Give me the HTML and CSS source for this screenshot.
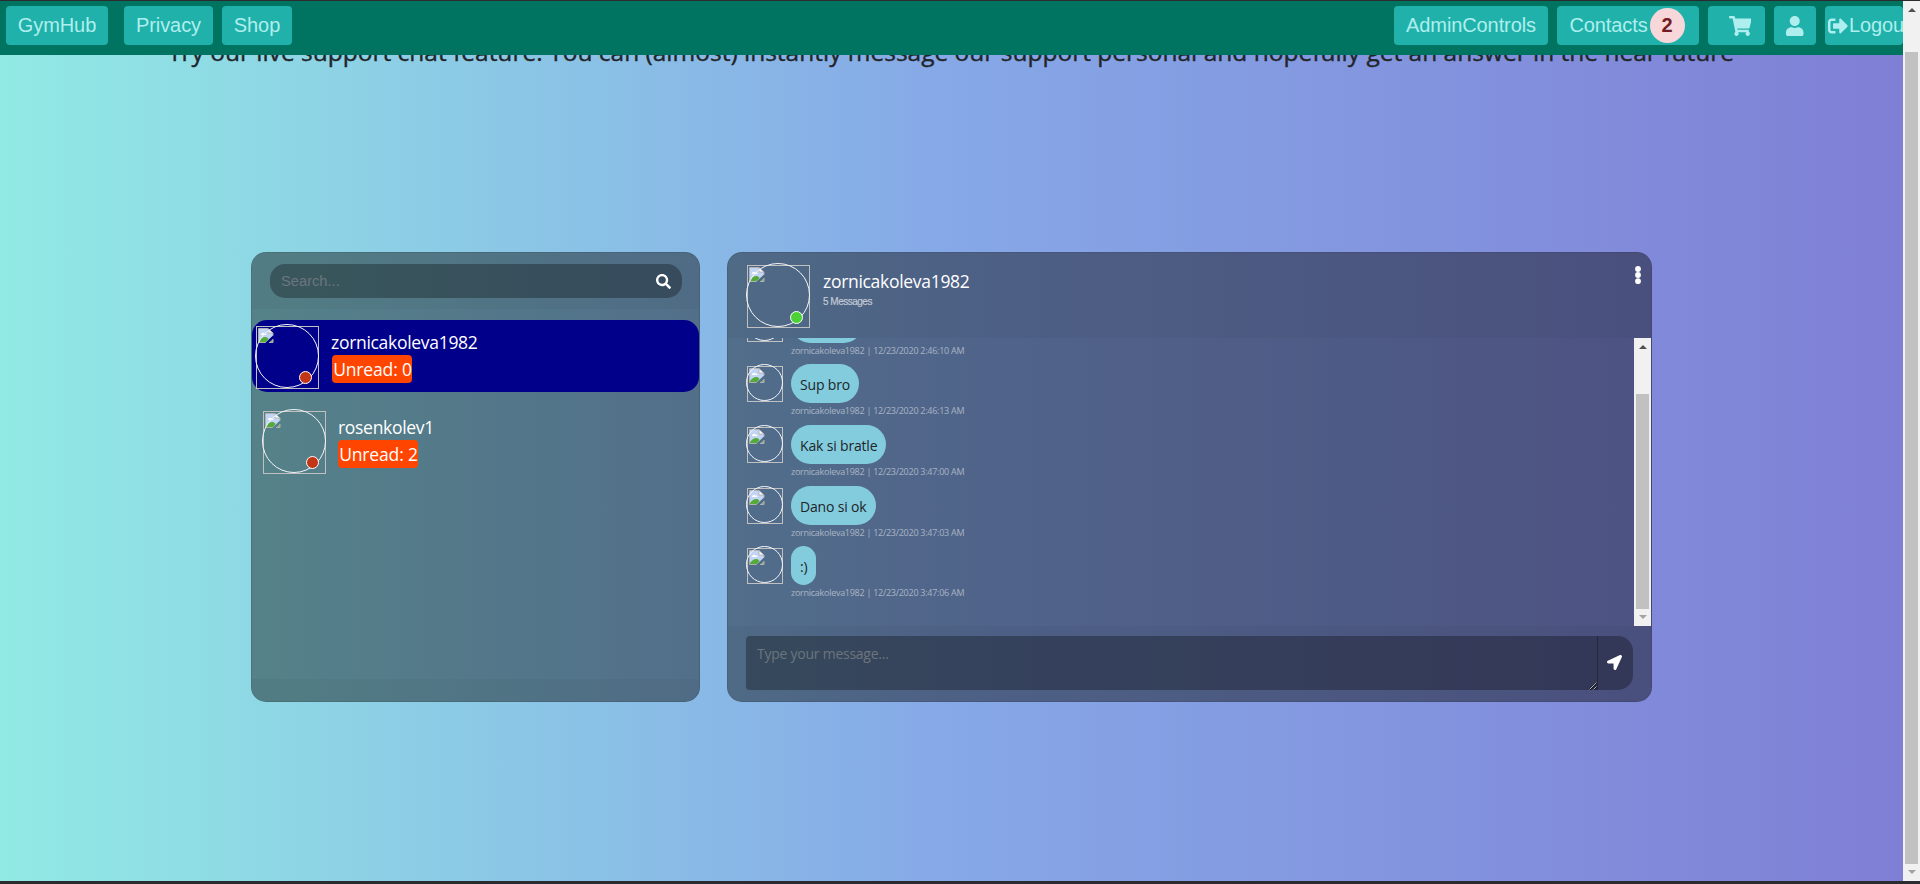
FILE: index.html
```html
<!DOCTYPE html>
<html lang="en">
<head>
<meta charset="utf-8">
<title>GymHub - Contacts</title>
<link rel="stylesheet" href="styles.css">
</head>
<body>
<svg class="symbols" aria-hidden="true">
  <symbol id="broken" viewBox="0 0 16 16">
    <path d="M1 1h9l5 4v2.500L7.500 14.500H1z" fill="#c3d5f5"/>
    <path d="M3 7a2 2 0 0 1 3.500-1.500A1.500 1.500 0 0 1 8.500 7z" fill="#fff"/>
    <path d="M1 14.500v-1.500C3 10.500 5 9 7 9c1.500 0 2.500.6 3.500 2L7.500 14.500z" fill="#55ab39"/>
    <path d="M11 14.500L15 11v3.500z" fill="#8fae84"/>
    <path d="M7.500 14.500h-7V.5H10M15 5v2.500M15 11v3.500h-4" fill="none" stroke="#b0b0b0"/>
    <path d="M10 .5V5h5z" fill="#fff" stroke="#aaa" stroke-width=".8"/>
  </symbol>
</svg>
<div class="frame">
  <div class="page">
    <nav class="nav">
      <div class="nav-group">
        <a class="btn brand">GymHub</a><a class="btn privacy">Privacy</a><a class="btn shop">Shop</a>
      </div>
      <div class="nav-group">
        <a class="btn admin">AdminControls</a>
        <a class="btn contacts">Contacts<span class="count">2</span></a>
        <a class="btn cart"><svg width="22.500" height="20" viewBox="0 0 576 512"><path fill="currentColor" d="M528.120 301.319l47.273-208C578.806 78.301 567.391 64 551.990 64H159.208l-9.166-44.810C147.758 8.021 137.930 0 126.529 0H24C10.745 0 0 10.745 0 24v16c0 13.255 10.745 24 24 24h69.883l70.248 343.435C147.325 417.100 136 435.222 136 456c0 30.928 25.072 56 56 56s56-25.072 56-56c0-15.674-6.447-29.835-16.824-40h209.647C430.447 426.165 424 440.326 424 456c0 30.928 25.072 56 56 56s56-25.072 56-56c0-22.172-12.888-41.332-31.579-50.405l5.517-24.276c3.413-15.018-8.002-29.319-23.403-29.319H218.117l-6.545-32h293.145c11.206 0 20.920-7.754 23.403-18.681z"/></svg></a>
        <a class="btn user"><svg width="17.500" height="20" viewBox="0 0 448 512"><path fill="currentColor" d="M224 256c70.700 0 128-57.300 128-128S294.700 0 224 0 96 57.300 96 128s57.300 128 128 128zm89.600 32h-16.700c-22.200 10.200-46.900 16-72.900 16s-50.600-5.800-72.900-16h-16.700C60.200 288 0 348.200 0 422.400V464c0 26.500 21.500 48 48 48h352c26.500 0 48-21.500 48-48v-41.600c0-74.200-60.200-134.400-134.400-134.400z"/></svg></a>
        <a class="btn logout"><svg width="20" height="20" viewBox="0 0 512 512"><path fill="currentColor" d="M497 273L329 441c-15 15-41 4.500-41-17v-96H152c-13.300 0-24-10.700-24-24v-96c0-13.300 10.700-24 24-24h136V88c0-21.400 25.900-32 41-17l168 168c9.300 9.400 9.300 24.600 0 34zM192 436v-40c0-6.600-5.400-12-12-12H96c-17.700 0-32-14.300-32-32V160c0-17.700 14.300-32 32-32h84c6.600 0 12-5.400 12-12V76c0-6.600-5.400-12-12-12H96c-53 0-96 43-96 96v192c0 53 43 96 96 96h84c6.600 0 12-5.400 12-12z"/></svg>Logout</a>
      </div>
    </nav>
    <div class="lead"><h1 class="heading">Try our live support chat feature. You can (almost) instantly message our support personal and hopefully get an answer in the near future</h1></div>

    <main class="chat">
      <section class="card people">
        <header class="card-bar search-bar">
          <div class="search"><span>Search...</span><svg width="15" height="15" viewBox="0 0 512 512"><path fill="#fff" d="M505 442.700L405.300 343c-4.500-4.500-10.600-7-17-7H372c27.600-35.300 44-79.700 44-128C416 93.100 322.900 0 208 0S0 93.100 0 208s93.100 208 208 208c48.300 0 92.700-16.400 128-44v16.300c0 6.400 2.500 12.500 7 17l99.700 99.700c9.400 9.400 24.600 9.400 33.900 0l28.300-28.300c9.400-9.400 9.400-24.600.1-34zM208 336c-70.700 0-128-57.200-128-128 0-70.700 57.200-128 128-128 70.700 0 128 57.200 128 128 0 70.700-57.200 128-128 128z"/></svg></div>
        </header>
        <div class="people-list">
          <div class="person active">
            <div class="avatar"><svg class="broken"><use href="#broken"/></svg><i class="ring"></i><i class="dot"></i></div>
            <div class="info"><div class="name">zornicakoleva1982</div><span class="unread">Unread: 0</span></div>
          </div>
          <div class="person">
            <div class="avatar"><svg class="broken"><use href="#broken"/></svg><i class="ring"></i><i class="dot"></i></div>
            <div class="info"><div class="name">rosenkolev1</div><span class="unread">Unread: 2</span></div>
          </div>
        </div>
        <footer class="card-bar people-foot"></footer>
      </section>

      <section class="card talk">
        <header class="card-bar talk-head">
          <div class="avatar"><svg class="broken"><use href="#broken"/></svg><i class="ring"></i><i class="dot online"></i></div>
          <div class="info"><div class="name">zornicakoleva1982</div><p class="total">5 Messages</p></div>
          <svg class="dots" width="6" height="18" viewBox="0 0 6 18" fill="#fff"><circle cx="3" cy="3" r="2.900"/><circle cx="3" cy="9" r="2.900"/><circle cx="3" cy="15.200" r="2.900"/></svg>
        </header>
        <div class="talk-body">
          <div class="messages">
            <div class="message"><div class="avatar small"><svg class="broken"><use href="#broken"/></svg><i class="ring"></i></div><div><div class="bubble first"></div><div class="time">zornicakoleva1982 | 12/23/2020 2:46:10 AM</div></div></div>
            <div class="message"><div class="avatar small"><svg class="broken"><use href="#broken"/></svg><i class="ring"></i></div><div><div class="bubble">Sup bro</div><div class="time">zornicakoleva1982 | 12/23/2020 2:46:13 AM</div></div></div>
            <div class="message"><div class="avatar small"><svg class="broken"><use href="#broken"/></svg><i class="ring"></i></div><div><div class="bubble">Kak si bratle</div><div class="time">zornicakoleva1982 | 12/23/2020 3:47:00 AM</div></div></div>
            <div class="message"><div class="avatar small"><svg class="broken"><use href="#broken"/></svg><i class="ring"></i></div><div><div class="bubble">Dano si ok</div><div class="time">zornicakoleva1982 | 12/23/2020 3:47:03 AM</div></div></div>
            <div class="message"><div class="avatar small"><svg class="broken"><use href="#broken"/></svg><i class="ring"></i></div><div><div class="bubble">:)</div><div class="time">zornicakoleva1982 | 12/23/2020 3:47:06 AM</div></div></div>
          </div>
          <div class="scroll inner"><i class="arrow up"></i><i class="thumb"></i><i class="arrow down"></i></div>
        </div>
        <footer class="card-bar talk-foot">
          <div class="compose"><span>Type your message...</span><svg class="grip" width="8" height="8" viewBox="0 0 8 8"><path d="M0.500 8L8 .5M4.500 8L8 4.500" stroke="#111526" stroke-width="2"/><path d="M.5 7.500L7.500 .5M4.500 7.500L7.500 4.500" stroke="#c8c8cc" stroke-width=".9"/></svg></div>
          <div class="send"><svg width="15" height="15" viewBox="0 0 512 512"><path fill="#fff" d="M444.520 3.520L28.740 195.420c-47.970 22.390-31.980 92.750 19.190 92.750h175.910v175.910c0 51.170 70.360 67.170 92.750 19.190l191.900-415.780c15.990-38.390-25.590-79.970-63.970-63.970z"/></svg></div>
        </footer>
      </section>
    </main>
  </div>
  <div class="scroll outer"><i class="arrow up"></i><i class="thumb"></i><i class="arrow down"></i></div>
</div>
</body>
</html>
```
FILE: styles.css
```css
* { box-sizing: border-box; }
body {
  margin: 0;
  height: 884px;
  overflow: hidden;
  padding: 1px 0 3px;
  background: #2b2b2f;
  font-family: "Open Sans", "Noto Sans", sans-serif;
  color: #212529;
}
.symbols { display: none; }
.frame { display: flex; height: 880px; }
.page {
  width: 1903px;
  overflow: hidden;
  background: linear-gradient(to right, #91eae4, #86a8e7, #7f7fd5);
}

/* navigation */
.nav {
  position: relative;
  z-index: 1;
  display: flex;
  justify-content: space-between;
  height: 54px;
  padding: 5px 0 0 6px;
  background: #007361;
}
.nav-group { display: flex; }
.btn {
  display: flex;
  align-items: center;
  justify-content: center;
  flex: none;
  height: 39px;
  border-radius: 4px;
  background: #20b2aa;
  color: #afeeee;
  font: 20px "Liberation Sans", Arial, sans-serif;
  letter-spacing: -.1px;
}
.brand { width: 102px; margin-right: 16px; }
.privacy { width: 89px; margin-right: 9px; }
.shop { width: 70px; }
.admin { width: 154px; margin-right: 9px; }
.contacts { width: 142px; margin-right: 9px; padding-right: 2px; }
.cart { width: 57px; margin-right: 9px; padding-left: 7px; }
.user { width: 42px; margin-right: 9px; }
.logout { width: 78px; justify-content: flex-start; padding-left: 3px; overflow: hidden; }
.logout svg { flex: none; margin-right: 1px; }
.count {
  width: 35px;
  height: 35px;
  margin-left: 2px;
  border-radius: 50%;
  background: #f8d7da;
  color: #721c24;
  font-weight: bold;
  line-height: 35px;
  text-align: center;
}

.lead { display: flow-root; height: 20px; }
.heading {
  margin: -23px 0 0 168px;
  font-size: 24.500px;
  font-weight: 500;
  -webkit-text-stroke: .4px #212529;
  line-height: 40px;
  white-space: nowrap;
}

/* cards */
.chat { display: flex; gap: 27px; margin: 177px 0 0 251px; }
.card {
  display: flex;
  flex-direction: column;
  height: 450px;
  border: 1px solid rgba(0, 0, 0, .125);
  border-radius: 15px;
  background: rgba(0, 0, 0, .4);
  background-clip: border-box;
  overflow: hidden;
}
.card-bar { flex: none; background: rgba(0, 0, 0, .03); }
.people { width: 449px; }
.talk { width: 925px; }
.search-bar { height: 56px; padding: 11px 17px 0 18px; }
.search {
  display: flex;
  align-items: center;
  justify-content: space-between;
  height: 34px;
  padding: 0 11px;
  border-radius: 15px;
  background: rgba(0, 0, 0, .3);
  color: #6c757d;
  font: 14.700px "Liberation Sans", Arial, sans-serif;
}
.people-list { flex: 1; padding-top: 11px; }
.people-foot { height: 22px; }
.person { display: flex; height: 72px; margin-bottom: 13px; padding: 6px 0 0 11px; }
.person.active { padding-left: 4px; border-radius: 15px; background: #00008b; }
.active .info { margin-left: 13px; }
.active .name { margin-left: -1px; }

/* avatars with a missing picture */
.avatar { position: relative; flex: none; width: 63px; height: 63px; border: 1px solid #c0c0c0; }
.broken { display: block; width: 16px; height: 16px; margin: 1px; }
.ring { position: absolute; left: -2px; top: -3px; width: 64px; height: 64px; border: 1.500px solid #f5f6fa; border-radius: 50%; }
.dot { position: absolute; right: 6px; bottom: 4px; width: 13px; height: 13px; border: 1px solid #fff; border-radius: 50%; background: #c23616; }
.dot.online { background: #4cd137; }
.talk-head .dot { bottom: 3px; }
.small { width: 36px; height: 36px; }
.small .ring { width: 37px; height: 37px; }

.info { margin-left: 12px; }
.name { height: 23px; line-height: 30px; font-size: 17.500px; letter-spacing: -.3px; color: #fff; white-space: nowrap; }
.person .name { margin-top: 1px; height: 28px; }
.unread {
  display: block;
  width: 80px;
  height: 28px;
  padding-left: 1px;
  border-radius: 4px;
  background: #ff4500;
  color: #fff;
  font-size: 17.500px;
  letter-spacing: -.15px;
  line-height: 28px;
  text-align: center;
  white-space: nowrap;
}

/* conversation */
.talk-head { display: flex; position: relative; height: 85px; padding: 12px 0 0 19px; }
.talk-head .info { margin-left: 13px; }
.talk-head .name { margin-top: 1px; }
.total { margin: 6px 0 0; color: rgba(255, 255, 255, .6); font: 10px/14px "Liberation Sans", Arial, sans-serif; letter-spacing: -.5px; -webkit-text-stroke: .2px rgba(255, 255, 255, .6); }
.dots { position: absolute; right: 10px; top: 13px; }
.talk-body { display: flex; height: 288px; }
.messages { flex: 1; height: 288px; padding-left: 19px; overflow: hidden; }
.message { display: flex; height: 60.700px; }
.message:first-child { margin-top: -34.500px; }
.small { margin: 2px 8px 0 0; }
.bubble {
  width: max-content;
  height: 39px;
  padding: 0 9px;
  border-radius: 20px;
  background: #82ccdd;
  font-size: 14px;
  letter-spacing: -.17px;
  line-height: 41px;
}
.bubble.first { width: 72px; }
.time { height: 15px; color: rgba(255, 255, 255, .5); font-size: 9px; letter-spacing: -.27px; line-height: 16px; white-space: nowrap; }
.talk-foot { display: flex; height: 75px; padding: 10px 0 0 18px; }
.compose {
  position: relative;
  width: 851px;
  height: 54px;
  padding: 7px 11px;
  border-radius: 4px 0 0 4px;
  background: rgba(0, 0, 0, .3);
  color: #6c757d;
  font-size: 14px;
  letter-spacing: -.25px;
  line-height: 21px;
}
.grip { position: absolute; right: 0; bottom: 0; }
.send {
  display: flex;
  align-items: center;
  justify-content: center;
  width: 36px;
  height: 54px;
  padding: 0 2px 1px 0;
  border-left: 1px solid rgba(0, 0, 0, .3);
  border-radius: 0 15px 15px 0;
  background: rgba(0, 0, 0, .3);
}

/* scroll bars */
.scroll { display: flex; flex-direction: column; align-items: center; flex: none; width: 17px; background: #f1f1f1; }
.thumb { width: 13px; background: #c1c1c1; }
.inner .thumb { height: 215px; margin-top: 45px; }
.outer .thumb { height: 812px; margin-top: 40px; }
.arrow { width: 0; height: 0; border: 4px solid transparent; border-top: 0; }
.up { margin-top: 7px; border-bottom: 4px solid #505050; }
.down { margin-top: 6px; border-bottom: 0; border-top: 4px solid #a3a3a3; }
```
